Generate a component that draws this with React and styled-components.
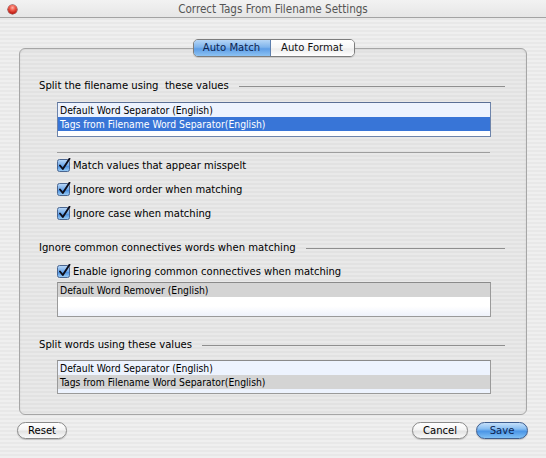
import React from "react";
import styled, { createGlobalStyle } from "styled-components";

const Global = createGlobalStyle`
  html, body { margin: 0; padding: 0; background: #ececec; }
  * { box-sizing: border-box; }
`;

const stripes = `repeating-linear-gradient(to bottom, #efefef 0px, #efefef 2px, #e8e8e8 2px, #e8e8e8 4px)`;
const darkStripes = `repeating-linear-gradient(to bottom, #e9e9e9 0px, #e9e9e9 2px, #e2e2e2 2px, #e2e2e2 4px)`;

const Window = styled.div`
  width: 546px;
  height: 458px;
  display: flex;
  flex-direction: column;
  background: ${stripes};
  font-family: "DejaVu Sans Condensed", "DejaVu Sans", sans-serif;
  font-stretch: condensed;
  font-size: 10.2px;
  color: #000;
  overflow: hidden;
`;

const TitleBar = styled.div`
  height: 18px;
  display: flex;
  align-items: center;
  padding: 0 17px 0 8px;
  border-bottom: 1px solid #a3a3a3;
  background: linear-gradient(#f2f2f2, #e6e6e6);
`;

const CloseButton = styled.span`
  width: 9px;
  height: 9px;
  border-radius: 50%;
  margin-top: 2px;
  background: radial-gradient(circle at 50% 30%, #ffb3a8 0%, #f05a4a 35%, #b4120a 80%, #7a0a05 100%);
  box-shadow: 0 0 0 0.5px #6b1410;
`;

const Title = styled.div`
  flex: 1;
  text-align: center;
  font-size: 11.6px;
  color: #555;
  padding-top: 1px;
`;

const Body = styled.div`
  flex: 1;
  display: flex;
  flex-direction: column;
`;

const TabRow = styled.div`
  position: relative;
  z-index: 1;
  display: flex;
  justify-content: center;
  margin-top: 21px;
  margin-bottom: -9px;
  padding-left: 1px;
`;

const Segmented = styled.div`
  display: flex;
  height: 18px;
  border: 1px solid #7d7d7d;
  border-radius: 5px;
  overflow: hidden;
  box-shadow: 0 1px 1px rgba(0, 0, 0, 0.15);
`;

const Tab = styled.div`
  width: ${(p) => p.$w}px;
  display: flex;
  align-items: center;
  justify-content: center;
  font-size: 11.2px;
  color: ${(p) => (p.$active ? "#0d2552" : "#111")};
  background: ${(p) =>
    p.$active
      ? "linear-gradient(#b6d6f6 0%, #7fb4ec 45%, #5f9ee6 55%, #8cc2f2 100%)"
      : "linear-gradient(#ffffff 0%, #f6f6f6 50%, #ececec 55%, #ffffff 100%)"};
  border-right: ${(p) => (p.$active ? "1px solid #5e7fae" : "none")};
  padding-bottom: 1px;
`;

const Panel = styled.div`
  margin: 0 19px;
  height: 367px;
  border: 1px solid #a6a6a6;
  border-radius: 6px;
  background: ${darkStripes};
  box-shadow: inset 0 1px 2px rgba(0, 0, 0, 0.08);
  display: flex;
  flex-direction: column;
`;

const SectionHeader = styled.div`
  display: flex;
  align-items: center;
  gap: 10px;
  height: 14px;
  line-height: 14px;
  margin-top: ${(p) => p.$mt}px;
  padding: 0 21px 0 19px;
  white-space: pre;
  font-size: 11.2px;
`;

const Rule = styled.div`
  flex: 1;
  height: 1px;
  background: #8f8f8f;
  margin-top: 1px;
`;

const ListBox = styled.div`
  margin: ${(p) => p.$mt}px 35px 0 37px;
  height: ${(p) => p.$h}px;
  border: 1px solid ${(p) => (p.$focus ? "#6e84aa" : "#9a9a9a")};
  border-top-color: ${(p) => (p.$focus ? "#5a6f95" : "#8a8a8a")};
  background: ${(p) => p.$bg};
  display: flex;
  flex-direction: column;
  overflow: hidden;
`;

const ListRow = styled.div`
  height: 14px;
  line-height: 14px;
  padding-left: 2px;
  font-size: 10.3px;
  white-space: nowrap;
  background: ${(p) => p.$bg};
  color: ${(p) => (p.$selected ? "#ffffff" : "#000")};
`;

const Separator = styled.div`
  margin: 15px 36px 0 37px;
  height: 1px;
  background: #9e9e9e;
`;

const CheckRow = styled.label`
  display: flex;
  align-items: center;
  gap: 2px;
  height: ${(p) => p.$h}px;
  margin-top: ${(p) => p.$mt || 0}px;
  padding-left: 37px;
  font-size: 11.1px;
`;

const ButtonRow = styled.div`
  display: flex;
  align-items: center;
  margin-top: 7px;
  padding: 0 18px 0 17px;
  gap: 8px;
`;

const Spacer = styled.div`
  flex: 1;
`;

const Button = styled.button`
  width: ${(p) => p.$w}px;
  height: 17px;
  border-radius: 9px;
  font-family: inherit;
  font-stretch: condensed;
  font-size: 11.2px;
  padding: 0 0 1px;
  color: ${(p) => (p.$primary ? "#0d2552" : "#000")};
  border: 1px solid ${(p) => (p.$primary ? "#3f5e8f" : "#8a8a8a")};
  background: ${(p) =>
    p.$primary
      ? "linear-gradient(#c5e0fa 0%, #86bdf2 40%, #4b95e6 55%, #7fc0f5 100%)"
      : "linear-gradient(#ffffff 0%, #f4f4f4 45%, #e3e3e3 55%, #fafafa 100%)"};
  box-shadow: 0 1px 1px rgba(0, 0, 0, 0.18);
`;

function CheckBox() {
  return (
    <svg width="14" height="14" viewBox="0 0 14 14">
      <defs>
        <linearGradient id="cbg" x1="0" y1="0" x2="0" y2="1">
          <stop offset="0" stopColor="#bcd9f7" />
          <stop offset="0.5" stopColor="#6ea8ea" />
          <stop offset="0.55" stopColor="#4a8fe0" />
          <stop offset="1" stopColor="#9fd0f7" />
        </linearGradient>
      </defs>
      <rect x="0.5" y="1.5" width="12" height="12" rx="2" fill="url(#cbg)" stroke="#4b6690" />
      <path d="M3 7.5 L5.8 11 L12.5 0.8" fill="none" stroke="#0d0d1a" strokeWidth="1.9" strokeLinecap="round" strokeLinejoin="round" />
    </svg>
  );
}

export default function App() {
  return (
    <>
      <Global />
      <Window>
        <TitleBar>
          <CloseButton />
          <Title>Correct Tags From Filename Settings</Title>
        </TitleBar>
        <Body>
          <TabRow>
            <Segmented>
              <Tab $active $w={77}>Auto Match</Tab>
              <Tab $w={83}>Auto Format</Tab>
            </Segmented>
          </TabRow>
          <Panel>
            <SectionHeader $mt={30}>
              {"Split the filename using  these values"}
              <Rule />
            </SectionHeader>
            <ListBox $mt={9} $h={35} $focus $bg="#ffffff">
              <ListRow $bg="#edf3fe">Default Word Separator (English)</ListRow>
              <ListRow $bg="#3875d7" $selected>
                Tags from Filename Word Separator(English)
              </ListRow>
            </ListBox>
            <Separator />
            <CheckRow $h={24}>
              <CheckBox />
              Match values that appear misspelt
            </CheckRow>
            <CheckRow $h={24}>
              <CheckBox />
              Ignore word order when matching
            </CheckRow>
            <CheckRow $h={24}>
              <CheckBox />
              Ignore case when matching
            </CheckRow>
            <SectionHeader $mt={16}>
              Ignore common connectives words when matching
              <Rule />
            </SectionHeader>
            <CheckRow $h={22} $mt={5}>
              <CheckBox />
              Enable ignoring common connectives when matching
            </CheckRow>
            <ListBox $mt={0} $h={35} $bg="linear-gradient(#ffffff 0%, #ffffff 70%, #eef2fb 100%)">
              <ListRow $bg="#d4d4d4">Default Word Remover (English)</ListRow>
            </ListBox>
            <SectionHeader $mt={21}>
              Split words using these values
              <Rule />
            </SectionHeader>
            <ListBox $mt={8} $h={34} $bg="#edf3fe">
              <ListRow $bg="#edf3fe">Default Word Separator (English)</ListRow>
              <ListRow $bg="#d4d4d4">Tags from Filename Word Separator(English)</ListRow>
            </ListBox>
          </Panel>
          <ButtonRow>
            <Button $w={50}>Reset</Button>
            <Spacer />
            <Button $w={56}>Cancel</Button>
            <Button $w={52} $primary>
              Save
            </Button>
          </ButtonRow>
        </Body>
      </Window>
    </>
  );
}
